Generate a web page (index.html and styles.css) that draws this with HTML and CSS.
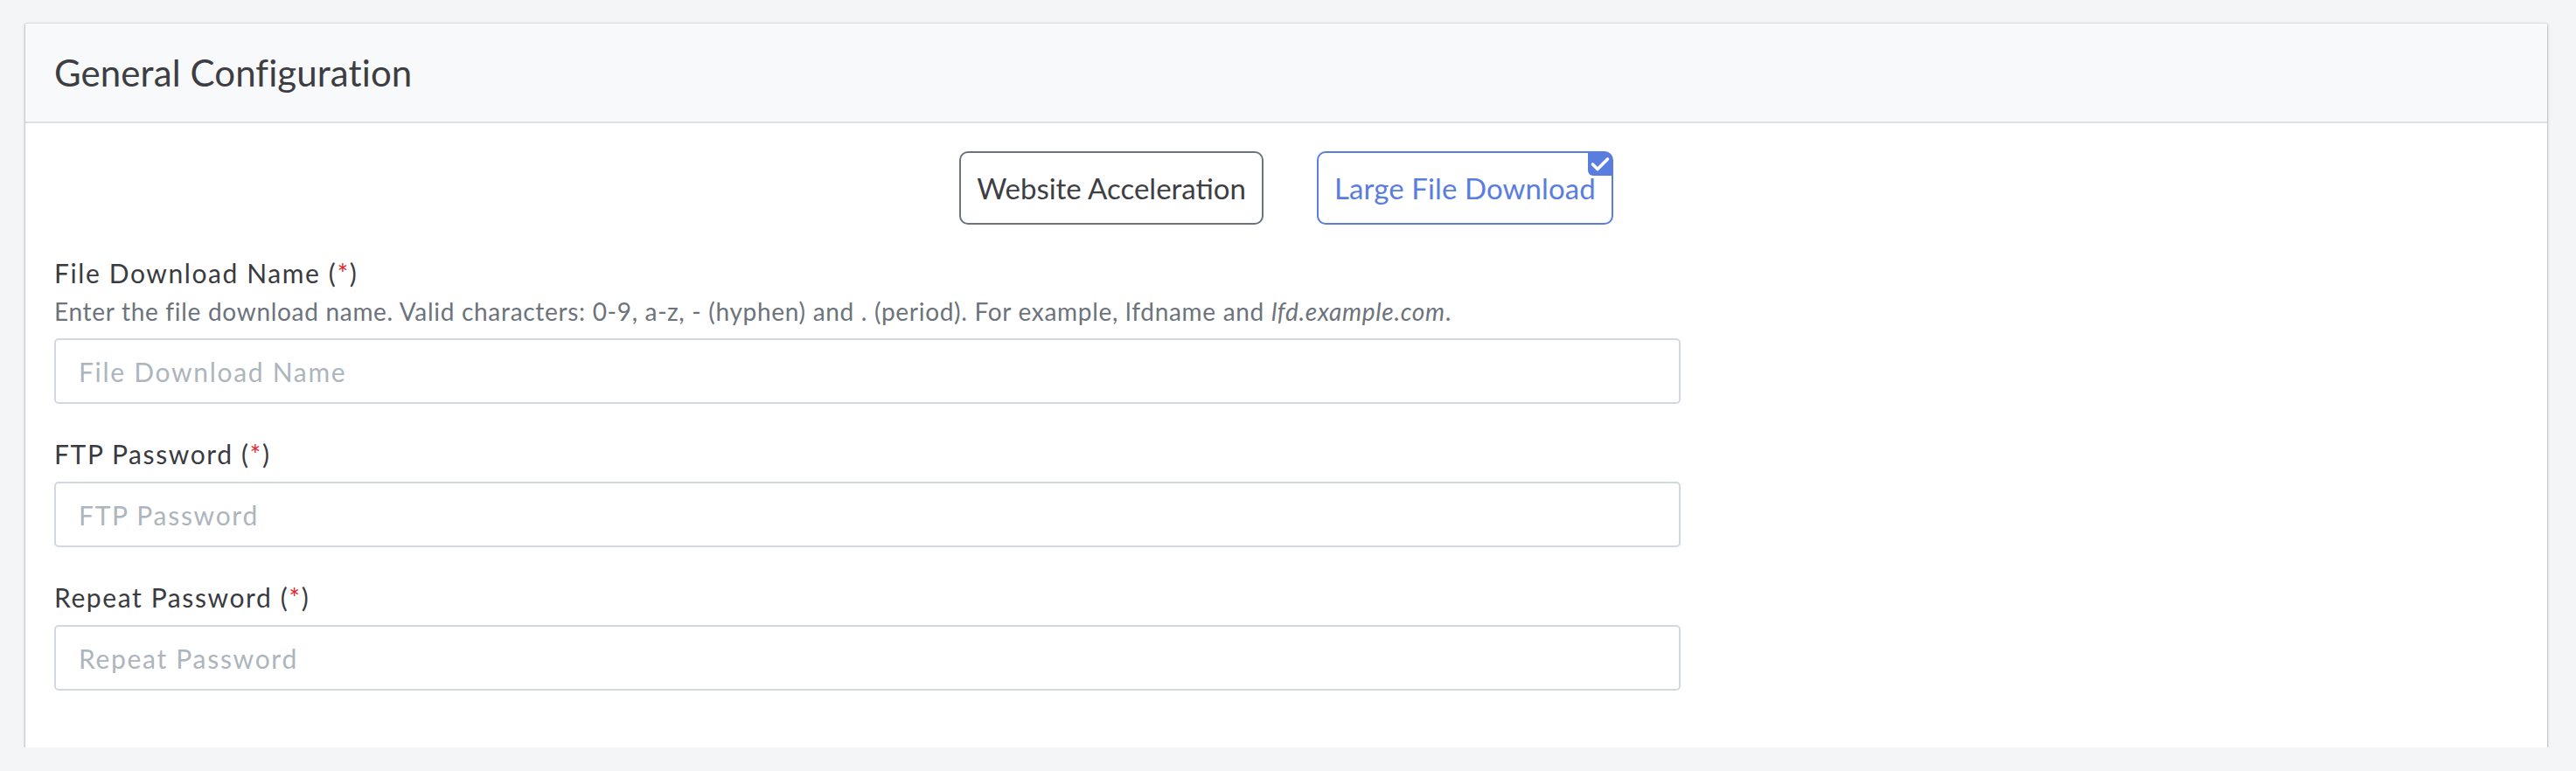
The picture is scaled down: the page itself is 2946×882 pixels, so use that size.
FILE: index.html
```html
<!DOCTYPE html>
<html lang="en">
<head>
<meta charset="utf-8">
<title>General Configuration</title>
<link rel="stylesheet" href="styles.css">
</head>
<body>
<div class="page">
  <section class="card">
    <header class="card-header">
      <h2 class="card-title">General Configuration</h2>
    </header>
    <div class="card-body">
      <div class="mode-row">
        <button type="button" class="mode-btn">Website Acceleration</button>
        <button type="button" class="mode-btn active">Large File Download
          <span class="check-badge"><svg viewBox="0 0 28 27" width="28" height="27"><path d="M5.5 14 L11 19.5 L22.5 8" fill="none" stroke="#fff" stroke-width="3.6" stroke-linecap="round" stroke-linejoin="round"/></svg></span>
        </button>
      </div>
      <form class="form-col">
        <div class="form-group">
          <div class="field-head">
            <label class="field-label" for="fdn">File Download Name (<span class="req">*</span>)</label>
            <div class="help">Enter the file download name. Valid characters: 0-9, a-z, - (hyphen) and . (period). For example, lfdname and <em>lfd.example.com</em>.</div>
          </div>
          <input id="fdn" class="text-input" type="text" placeholder="File Download Name">
        </div>
        <div class="form-group">
          <div class="field-head">
            <label class="field-label" for="ftp">FTP Password (<span class="req">*</span>)</label>
          </div>
          <input id="ftp" class="text-input" type="password" placeholder="FTP Password">
        </div>
        <div class="form-group">
          <div class="field-head">
            <label class="field-label" for="rep">Repeat Password (<span class="req">*</span>)</label>
          </div>
          <input id="rep" class="text-input" type="password" placeholder="Repeat Password">
        </div>
      </form>
    </div>
  </section>
</div>
</body>
</html>
```

FILE: styles.css
```css
* { box-sizing: border-box; }

html, body {
  margin: 0;
  padding: 0;
  background: #f4f5f7;
  font-family: Lato, "Open Sans", "Liberation Sans", sans-serif;
  color: #3e3f44;
}

.page {
  padding: 27px 33px 0 29px;
}

.card {
  background: #fff;
  box-shadow: 0 1px 3px rgba(50, 60, 70, 0.45), 0 0 1px rgba(50, 60, 70, 0.3);
}

.card-header {
  background: #f8f9fa;
  border-bottom: 2px solid #dde1e6;
  height: 114px;
  padding: 0 33px;
  display: flex;
  align-items: center;
}

.card-title {
  margin: 0;
  font-size: 42px;
  font-weight: 400;
  line-height: 63px;
  letter-spacing: 0.1px;
  color: #3d3e43;
}

.card-body {
  padding: 32px 33px 65px;
}

.mode-row {
  display: flex;
  justify-content: center;
  gap: 61px;
  margin-bottom: 33px;
}

.mode-btn {
  position: relative;
  font-family: inherit;
  font-size: 33px;
  line-height: 50px;
  padding: 15px 18px;
  border: 2px solid #6c737c;
  border-radius: 10px;
  background: #fff;
  color: #3e3f44;
  cursor: pointer;
}

.mode-btn.active {
  border-color: #5a7de0;
  color: #5a7de0;
  letter-spacing: 0.1px;
}

.check-badge {
  position: absolute;
  top: -1px;
  right: -1px;
  width: 28px;
  height: 27px;
  background: #5a7de0;
  border-radius: 0 9px 0 6px;
  display: flex;
}

.check-badge svg { display: block; }

.form-col {
  width: 66%;
}

.form-group {
  margin-bottom: 35px;
}

.form-group:last-child { margin-bottom: 0; }

.field-head {
  margin-bottom: 9px;
}

.field-label {
  display: block;
  font-size: 30px;
  line-height: 45px;
  letter-spacing: 1.6px;
  color: #3a3b40;
}

.req { color: #e3242b; }

.help {
  font-size: 28px;
  line-height: 43px;
  letter-spacing: 0.7px;
  color: #6c737c;
}

.help em { font-style: italic; }

.text-input {
  display: block;
  width: 100%;
  height: 75px;
  border: 2px solid #d3d8dd;
  border-radius: 5px;
  padding: 0 26px;
  font-family: inherit;
  font-size: 30px;
  letter-spacing: 1.7px;
  color: #3e3f44;
  background: #fff;
  outline: none;
}

.text-input::placeholder {
  color: #adb5bd;
}
```
